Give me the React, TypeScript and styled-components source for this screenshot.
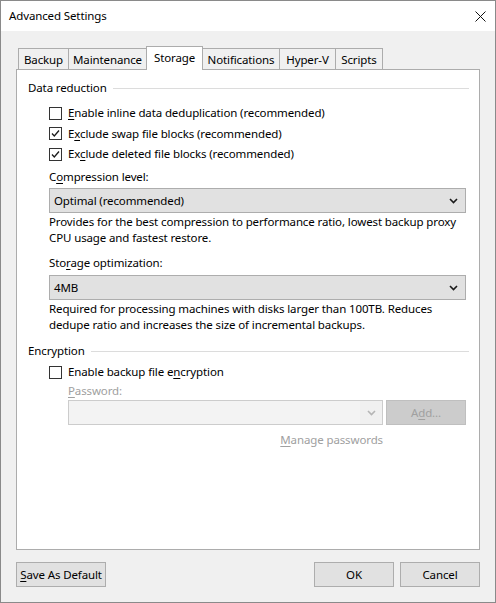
import React from 'react';
import styled, { createGlobalStyle } from 'styled-components';

const Global = createGlobalStyle`
  html, body { margin: 0; padding: 0; background: #ffffff; }
  body { font-family: "Segoe UI", "Noto Sans", sans-serif; font-size: 11.5px; letter-spacing: -0.12px; color: #000; }
  * { box-sizing: border-box; }
`;

const Window = styled.div`
  width: 496px;
  height: 603px;
  border: 1px solid #8a8a8a;
  display: flex;
  flex-direction: column;
  background: #f0f0f0;
  white-space: nowrap;
`;

const TitleBar = styled.div`
  height: 30px;
  flex: none;
  background: #ffffff;
  display: flex;
  align-items: center;
  justify-content: space-between;
  padding: 0 9px 0 8px;
`;

const Title = styled.span`
  line-height: 16px;
`;

const Body = styled.div`
  flex: 1;
  display: flex;
  flex-direction: column;
  padding: 15px;
`;

const TabStrip = styled.div`
  height: 23px;
  flex: none;
  display: flex;
  align-items: flex-end;
  padding-left: 2px;
  position: relative;
  z-index: 1;
`;

const Tab = styled.div<{ $w: number; $active?: boolean }>`
  width: ${(p) => p.$w}px;
  height: ${(p) => (p.$active ? 24 : 21)}px;
  margin-bottom: ${(p) => (p.$active ? -1 : 0)}px;
  margin-left: -1px;
  &:first-child { margin-left: 0; }
  border: 1px solid #acacac;
  border-bottom: none;
  background: ${(p) => (p.$active ? '#ffffff' : '#f0f0f0')};
  position: relative;
  z-index: ${(p) => (p.$active ? 2 : 0)};
  display: flex;
  align-items: center;
  justify-content: center;
  padding-top: ${(p) => (p.$active ? 0 : 2)}px;
  padding-bottom: ${(p) => (p.$active ? 2 : 0)}px;
  line-height: 16px;
`;

const Panel = styled.div`
  flex: 1;
  background: #ffffff;
  border: 1px solid #acacac;
  padding: 10px 10px 10px 11px;
  display: flex;
  flex-direction: column;
`;

const GroupHeader = styled.div<{ $mt?: number }>`
  display: flex;
  align-items: center;
  height: 16px;
  line-height: 16px;
  margin-top: ${(p) => p.$mt ?? 0}px;
  &::after {
    content: '';
    flex: 1;
    height: 1px;
    background: #dcdcdc;
    margin-left: 6px;
    margin-top: 1px;
  }
`;

const GroupBody = styled.div`
  display: flex;
  flex-direction: column;
  padding-left: 21px;
  padding-right: 3px;
`;

const CheckRow = styled.label<{ $mt?: number }>`
  display: flex;
  align-items: center;
  height: 20px;
  margin-top: ${(p) => p.$mt ?? 0}px;
  line-height: 16px;
`;

const Box = styled.span`
  width: 13px;
  height: 13px;
  border: 1px solid #333333;
  background: #ffffff;
  margin-right: 6px;
  display: flex;
  align-items: center;
  justify-content: center;
  flex: none;
`;

const FieldLabel = styled.div<{ $mt?: number; $disabled?: boolean; $indent?: number }>`
  line-height: 16px;
  height: 16px;
  margin-top: ${(p) => p.$mt ?? 0}px;
  margin-left: ${(p) => p.$indent ?? 0}px;
  color: ${(p) => (p.$disabled ? '#a0a0a0' : '#000')};
`;

const Select = styled.div<{ $mt?: number }>`
  height: 25px;
  margin-top: ${(p) => p.$mt ?? 0}px;
  background: #e1e1e1;
  border: 1px solid #adadad;
  display: flex;
  align-items: center;
  justify-content: space-between;
  padding: 0 7px 0 4px;
  line-height: 16px;
`;

const Desc = styled.div<{ $mt?: number }>`
  margin-top: ${(p) => p.$mt ?? 0}px;
  line-height: 16px;
`;

const PasswordRow = styled.div`
  display: flex;
  margin-top: 1px;
  margin-left: 19px;
  gap: 3px;
`;

const DisabledCombo = styled.div`
  flex: 1;
  height: 25px;
  background: #f3f3f3;
  border: 1px solid #cccccc;
  display: flex;
  justify-content: flex-end;
`;

const ComboArrow = styled.div`
  width: 22px;
  display: flex;
  align-items: center;
  justify-content: center;
  background: #f0f0f0;
`;

const DisabledButton = styled.div`
  width: 80px;
  height: 25px;
  background: #cccccc;
  border: 1px solid #bfbfbf;
  color: #a0a0a0;
  display: flex;
  align-items: center;
  justify-content: center;
  line-height: 16px;
`;

const LinkRow = styled.div`
  display: flex;
  justify-content: flex-end;
  margin-top: 7px;
  padding-right: 83px;
  line-height: 16px;
  color: #a0a0a0;
`;

const Footer = styled.div`
  display: flex;
  align-items: center;
  margin-top: 12px;
  height: 25px;
  flex: none;
`;

const Button = styled.div<{ $w: number; $ml?: number }>`
  width: ${(p) => p.$w}px;
  height: 25px;
  margin-left: ${(p) => p.$ml ?? 0}px;
  background: #e1e1e1;
  border: 1px solid #adadad;
  display: flex;
  align-items: center;
  justify-content: center;
  line-height: 16px;
`;

const Spacer = styled.div`
  flex: 1;
`;

const U = styled.span`
  text-decoration: underline;
  text-underline-offset: 2px;
`;

const Chevron = ({ color = '#1a1a1a' }: { color?: string }) => (
  <svg width="9" height="6" viewBox="0 0 9 6">
    <path d="M1 1 L4.5 4.5 L8 1" fill="none" stroke={color} strokeWidth="1.6" />
  </svg>
);

const Check = () => (
  <svg width="11" height="11" viewBox="0 0 11 11">
    <path d="M2 5.5 L4.3 8 L9 2.5" fill="none" stroke="#1a1a1a" strokeWidth="1.3" />
  </svg>
);

const CloseIcon = () => (
  <svg width="11" height="11" viewBox="0 0 11 11">
    <path d="M0.5 0.5 L10.5 10.5 M10.5 0.5 L0.5 10.5" stroke="#111" strokeWidth="1" />
  </svg>
);

const CheckBox = ({ checked, children, mt }: { checked?: boolean; children: React.ReactNode; mt?: number }) => (
  <CheckRow $mt={mt}>
    <Box>{checked && <Check />}</Box>
    <span>{children}</span>
  </CheckRow>
);

const tabs: { label: string; w: number; active?: boolean }[] = [
  { label: 'Backup', w: 51 },
  { label: 'Maintenance', w: 79 },
  { label: 'Storage', w: 57, active: true },
  { label: 'Notifications', w: 78 },
  { label: 'Hyper-V', w: 57 },
  { label: 'Scripts', w: 48 },
];

export default function App() {
  return (
    <>
      <Global />
      <Window>
        <TitleBar>
          <Title>Advanced Settings</Title>
          <CloseIcon />
        </TitleBar>
        <Body>
          <TabStrip>
            {tabs.map((t) => (
              <Tab key={t.label} $w={t.w} $active={t.active}>
                {t.label}
              </Tab>
            ))}
          </TabStrip>
          <Panel>
            <GroupHeader>Data reduction</GroupHeader>
            <GroupBody>
              <CheckBox mt={7}>
                <U>E</U>nable inline data deduplication (recommended)
              </CheckBox>
              <CheckBox checked mt={0.5}>
                E<U>x</U>clude swap file blocks (recommended)
              </CheckBox>
              <CheckBox checked mt={0.5}>
                Ex<U>c</U>lude deleted file blocks (recommended)
              </CheckBox>
              <FieldLabel $mt={5}>
                C<U>o</U>mpression level:
              </FieldLabel>
              <Select $mt={3}>
                <span>Optimal (recommended)</span>
                <Chevron />
              </Select>
              <Desc $mt={1}>
                Provides for the best compression to performance ratio, lowest backup proxy
                <br />
                CPU usage and fastest restore.
              </Desc>
              <FieldLabel $mt={9}>
                Sto<U>r</U>age optimization:
              </FieldLabel>
              <Select $mt={4}>
                <span>4MB</span>
                <Chevron />
              </Select>
              <Desc $mt={1}>
                Required for processing machines with disks larger than 100TB. Reduces
                <br />
                dedupe ratio and increases the size of incremental backups.
              </Desc>
            </GroupBody>
            <GroupHeader $mt={10}>Encryption</GroupHeader>
            <GroupBody>
              <CheckBox mt={3}>
                Enable backup file e<U>n</U>cryption
              </CheckBox>
              <FieldLabel $mt={1} $indent={19} $disabled>
                <U>P</U>assword:
              </FieldLabel>
              <PasswordRow>
                <DisabledCombo>
                  <ComboArrow>
                    <Chevron color="#b5b5b5" />
                  </ComboArrow>
                </DisabledCombo>
                <DisabledButton>
                  A<U>d</U>d...
                </DisabledButton>
              </PasswordRow>
              <LinkRow>
                <span>
                  <U>M</U>anage passwords
                </span>
              </LinkRow>
            </GroupBody>
          </Panel>
          <Footer>
            <Button $w={90}>
              <span>
                <U>S</U>ave As Default
              </span>
            </Button>
            <Spacer />
            <Button $w={80}>OK</Button>
            <Button $w={80} $ml={6}>
              Cancel
            </Button>
          </Footer>
        </Body>
      </Window>
    </>
  );
}
